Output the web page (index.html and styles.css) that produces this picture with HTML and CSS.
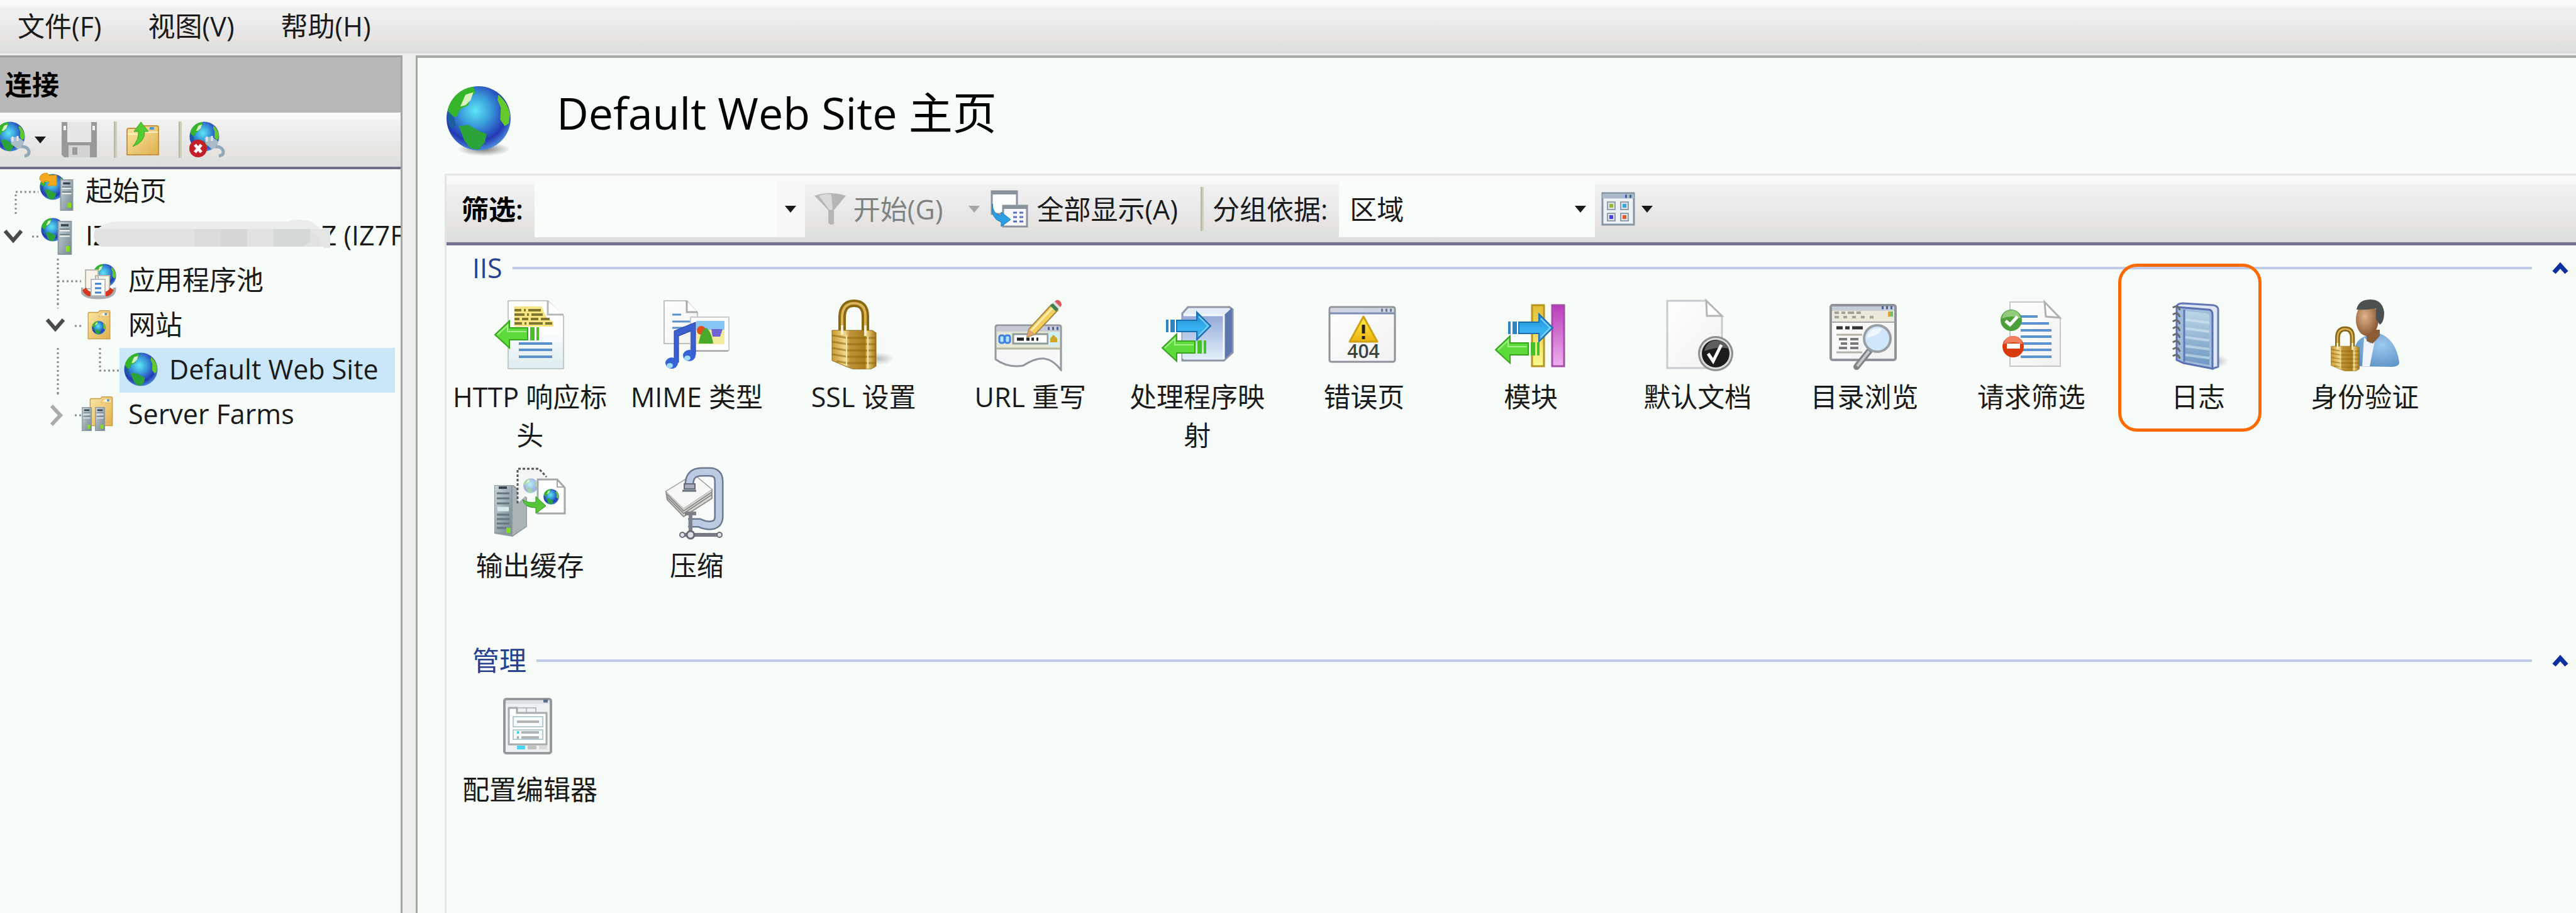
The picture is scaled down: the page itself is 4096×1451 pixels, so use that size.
FILE: index.html
```html
<!DOCTYPE html>
<html lang="zh-CN">
<head>
  <meta charset="utf-8">
  <title>Default Web Site 主页</title>
  <link rel="stylesheet" href="styles.css">
</head>
<body>
  <!-- shared gradients and symbols -->
  <svg class="defs" width="0" height="0" aria-hidden="true">
    <defs>
      <radialGradient id="gSea" cx="45%" cy="38%" r="65%">
        <stop offset="0" stop-color="#5fe6f5"/><stop offset=".35" stop-color="#3a9fdc"/>
        <stop offset=".75" stop-color="#2438b4"/><stop offset="1" stop-color="#4f9be0"/>
      </radialGradient>
      <linearGradient id="gGold" x1="0" x2="1" y1="0" y2="0">
        <stop offset="0" stop-color="#c79a33"/><stop offset=".3" stop-color="#f3d888"/>
        <stop offset=".4" stop-color="#c0943a"/><stop offset=".75" stop-color="#a97c1c"/>
        <stop offset=".8" stop-color="#ecd078"/><stop offset="1" stop-color="#a07416"/>
      </linearGradient>
      <linearGradient id="gPage" x1="0" x2="1" y1="0" y2="1">
        <stop offset="0" stop-color="#ffffff"/><stop offset="1" stop-color="#f1f1f1"/>
      </linearGradient>
      <linearGradient id="gPageBlue" x1="0" x2="0" y1="0" y2="1">
        <stop offset=".4" stop-color="#ffffff"/><stop offset="1" stop-color="#dcecef"/>
      </linearGradient>
      <linearGradient id="gFolder" x1="0" x2="1" y1="0" y2="1">
        <stop offset="0" stop-color="#fbe7a4"/><stop offset="1" stop-color="#dfb04f"/>
      </linearGradient>
      <linearGradient id="gServer" x1="0" x2="1" y1="0" y2="1">
        <stop offset="0" stop-color="#c9d4da"/><stop offset="1" stop-color="#74868f"/>
      </linearGradient>
      <linearGradient id="gBox" x1="0" x2="0" y1="0" y2="1">
        <stop offset="0" stop-color="#93a8d8"/><stop offset="1" stop-color="#e2effa"/>
      </linearGradient>
      <linearGradient id="gBlue" x1="0" x2="0" y1="0" y2="1">
        <stop offset="0" stop-color="#1d84c9"/><stop offset=".6" stop-color="#37b3f3"/><stop offset="1" stop-color="#4f9bd6"/>
      </linearGradient>
      <linearGradient id="gPurple" x1="0" x2="0" y1="0" y2="1">
        <stop offset="0" stop-color="#b93cbb"/><stop offset="1" stop-color="#eeb0ee"/>
      </linearGradient>
      <linearGradient id="gYellow" x1="0" x2="0" y1="0" y2="1">
        <stop offset="0" stop-color="#e3bf35"/><stop offset="1" stop-color="#fcf98f"/>
      </linearGradient>
      <linearGradient id="gBook" x1="0" x2="0" y1="0" y2="1">
        <stop offset="0" stop-color="#bcd6e6"/><stop offset="1" stop-color="#6f98c4"/>
      </linearGradient>
      <radialGradient id="gFace" cx="40%" cy="40%" r="60%">
        <stop offset="0" stop-color="#e0b58c"/><stop offset="1" stop-color="#8b5a34"/>
      </radialGradient>
      <radialGradient id="gShirt" cx="60%" cy="35%" r="70%">
        <stop offset="0" stop-color="#9dcaf0"/><stop offset="1" stop-color="#5d93c6"/>
      </radialGradient>
      <linearGradient id="gWarn" x1="0" x2="0" y1="0" y2="1">
        <stop offset="0" stop-color="#fdf04a"/><stop offset="1" stop-color="#edb30f"/>
      </linearGradient>
      <radialGradient id="gShadow">
        <stop offset="0" stop-color="#000" stop-opacity=".5"/><stop offset="1" stop-color="#000" stop-opacity="0"/>
      </radialGradient>
    </defs>

    <symbol id="globe" viewBox="0 0 100 100">
      <circle cx="50" cy="50" r="49" fill="url(#gSea)"/>
      <path d="M3 38C6 20 22 4 42 2l3 8-8 10-3 10-12 6-6 12-10-2z" fill="#35b52a"/>
      <path d="M30 14l12-4-4 12-8 8-8 2z" fill="#d9f3c0"/>
      <path d="M20 62l14-2 14 8 14 6-2 12-10 12-12-2-10-12z" fill="#2ba338"/>
      <path d="M80 14c10 8 16 18 18 30l-2 14-6 4-7-10 1-18-5-12z" fill="#63c92c"/>
      <path d="M4 40l8 8 4 14-8 4C3 58 2 48 4 40z" fill="#1c5d9c"/>
    </symbol>

    <symbol id="tower" viewBox="0 0 26 62">
      <rect x="1" y="1" width="24" height="60" fill="url(#gServer)" stroke="#8a979e" stroke-width="2"/>
      <path d="M6 8h14" stroke="#33424c" stroke-width="4"/>
      <path d="M4 18h18M4 28h18" stroke="#fff" stroke-width="2"/>
      <path d="M4 15h18M4 25h18" stroke="#6c7c86" stroke-width="2"/>
      <rect x="15" y="46" width="7" height="10" fill="#84e016"/>
    </symbol>

    <symbol id="plugglobe" viewBox="0 0 58 58">
      <use href="#globe" x="0" y="0" width="48" height="48"/>
      <path d="M24 26l12-2 10 8-2 10-8 2-10-8z" fill="#a9bcc8"/>
      <path d="M28 24v8M36 23v8" stroke="#dfe8ee" stroke-width="3"/>
      <path d="M42 40q10 0 12 7 1 7-7 8" fill="none" stroke="#8fa9b8" stroke-width="5"/>
    </symbol>

    <symbol id="folder" viewBox="0 0 52 68">
      <path d="M1 8q0-3 3-3h20l4-4h20q3 0 3 3v62H1z" fill="url(#gFolder)" stroke="#c99c48" stroke-width="2"/>
      <path d="M25 14l5-8h19v9z" fill="#f7dfa0" stroke="#d3a957"/>
      <path d="M34 9h5" stroke="#fff" stroke-width="5"/><path d="M39 9h5" stroke="#4a97d8" stroke-width="5"/>
    </symbol>

    <symbol id="padlock" viewBox="0 0 72 112">
      <path d="M17 56V28Q18 7 36 7t18 21v29" fill="none" stroke="#8b6712" stroke-width="12"/>
      <path d="M17 56V28Q18 7 36 7t18 21v29" fill="none" stroke="#d8b558" stroke-width="4"/>
      <path d="M1 50h64l6 4v53l-9 5H36l-14-5-21-9z" fill="url(#gGold)" stroke="#8f6c1b"/>
      <path d="M1 58l24 4h46M1 68l24 4h46M1 78l24 4h46M1 88l24 4h46M8 99l17 3h46" fill="none" stroke="#8d6411" stroke-opacity=".55" stroke-width="3"/>
      <path d="M24 58v48M58 60v50" stroke="#f6e5ad" stroke-width="2"/>
      <path d="M17 42v15M54 42v17" stroke="#f8efcf" stroke-width="4"/>
    </symbol>

    <symbol id="arrowleft" viewBox="0 0 74 48">
      <path d="M2 24L25 2v11h29v19H25v13z" fill="#5cdb3a" stroke="#37a51e" stroke-width="2"/>
      <path d="M6 24L22 9v10h30" fill="none" stroke="#a5f08c" stroke-width="2"/>
      <path d="M58 12h7v21h-7zM68 12h4v21h-4z" fill="#46bf2a"/>
    </symbol>

    <symbol id="arrowright" viewBox="0 0 74 48">
      <path d="M72 24L50 2v13H18v18h32v13z" fill="url(#gBlue)" stroke="#1a6fb0" stroke-width="2"/>
      <path d="M53 9l15 15-15 15" fill="none" stroke="#7fd0fa" stroke-width="2"/>
      <path d="M8 14h7v20H8zM1 14h4v20H1z" fill="#2a86c8"/>
    </symbol>

    <symbol id="caret" viewBox="0 0 18 11">
      <path d="M0 0h18L9 11z" fill="currentColor"/>
    </symbol>
  </svg>

  <nav class="menubar">
    <button>文件(F)</button>
    <button>视图(V)</button>
    <button>帮助(H)</button>
  </nav>

  <div class="window">
    <aside class="connections">
      <h2 class="pane-title">连接</h2>
      <div class="pane-toolbar bar">
        <button class="connect" aria-label="连接">
          <svg width="50" height="58" viewBox="8 0 50 58"><use href="#plugglobe" width="58" height="58"/></svg>
          <svg class="caret" width="18" height="11"><use href="#caret"/></svg>
        </button>
        <button aria-label="保存">
          <svg width="58" height="58" viewBox="0 0 58 58">
            <path d="M1 1h56v56H5l-4-4z" fill="#989a9a"/>
            <path d="M10 1h38v32H10z" fill="#e6e7e7"/>
            <path d="M12 38h34v19H12z" fill="#d2d4d3"/>
            <path d="M18 41h8v12h-8z" fill="#9a9c9b"/>
            <path d="M4 7h4v7H4zM50 7h4v7h-4z" fill="#f4f4f4"/>
          </svg>
        </button>
        <span class="sep"></span>
        <button aria-label="向上">
          <svg width="58" height="58" viewBox="0 0 58 58">
            <path d="M4 14q0-3 3-3h16l4-4h24q3 0 3 3v43H4z" fill="url(#gFolder)" stroke="#c79540" stroke-width="2"/>
            <path d="M5 20h24l4-3h20" fill="none" stroke="#fff3c8" stroke-width="2"/>
            <path d="M40 11h7" stroke="#4a97d8" stroke-width="4"/>
            <path d="M26 1l12 15h-6q1 16-19 24 10-11 9-24h-7z" fill="#53cc33" stroke="#3ba51f"/>
          </svg>
        </button>
        <span class="sep"></span>
        <button aria-label="断开连接">
          <svg width="58" height="58" viewBox="0 0 58 58">
            <use href="#plugglobe" width="58" height="58"/>
            <circle cx="14" cy="43" r="14" fill="#c4202a"/>
            <path d="M9 37l10 12M19 37L9 49" stroke="#fff" stroke-width="5"/>
          </svg>
        </button>
      </div>

      <ul class="tree">
        <li class="node">
          <svg class="guide" width="61" height="71"><path d="M25 71V36h36"/></svg>
          <svg class="node-icon" width="58" height="64" viewBox="0 0 58 64">
            <use href="#globe" x="2" y="3" width="42" height="46"/>
            <path d="M2 14Q2 4 14 4l3 4 12-1v17H14l4-5q-8-6-10 2z" fill="#f3a81e" stroke="#d98a0c"/>
            <use href="#tower" x="32" y="14" width="26" height="50" preserveAspectRatio="none"/>
          </svg>
          <a href="#">起始页</a>
        </li>
        <li class="node">
          <svg class="guide" width="61" height="71"><path d="M51 36h10"/><path class="open" d="M8 27l13 15 13-15"/></svg>
          <svg class="node-icon" width="58" height="64" viewBox="0 0 58 64">
            <use href="#globe" x="4" y="3" width="38" height="40"/>
            <use href="#tower" x="29" y="9" width="26" height="54" preserveAspectRatio="none"/>
          </svg>
          <a href="#" class="masked"><span>IZ</span><svg class="mask" width="386" height="50" viewBox="0 0 386 50">
              <path d="M40 4h270q14-6 38 0l14 10v26H10Q-4 26 10 14q14-10 30-10z" fill="#eaedea"/>
              <path d="M5 16h373v28H14Q-4 32 5 16z" fill="#e0e2e0"/>
              <path d="M162 16h42v28h-42z" fill="#dadcda"/><path d="M204 16h42v28h-42z" fill="#d4d7d4"/>
              <path d="M288 16h58v20l-12 8h-46z" fill="#d5d9d6"/><path d="M346 16h32v30h-10l-8-12z" fill="#e3e6e3"/>
            </svg><span>Z (IZ7F</span></a>
        </li>
        <li class="node">
          <svg class="guide" width="129" height="71"><path d="M92 0v71M92 36h37"/></svg>
          <svg class="node-icon" width="58" height="64" viewBox="0 0 58 64">
            <use href="#globe" x="18" y="4" width="38" height="42"/>
            <path d="M7 16h20v30H7zM23 25h22v30H23z" fill="#f6f3e8" stroke="#b9b7ac" stroke-width="2"/>
            <path d="M1 44q-2 16 26 16t26-16" fill="none" stroke="#a9aeb2" stroke-width="5"/>
            <path d="M2 48q4 10 14 10l2-7q-8-1-10-7zM52 48q-4 10-14 10l-2-7q8-1 10-7z" fill="#d8361f"/>
            <path d="M16 31h22v26H16z" fill="#fff" stroke="#b5bcc2" stroke-width="2"/>
            <path d="M22 38h10M22 45h10M22 52h10" stroke="#3d7fd0" stroke-width="3"/>
          </svg>
          <a href="#">应用程序池</a>
        </li>
        <li class="node">
          <svg class="guide" width="129" height="71"><path d="M92 0v8M119 36h10"/><path class="open" d="M75 26l13 15 13-15"/></svg>
          <svg class="node-icon" width="58" height="64" viewBox="0 0 58 64">
            <use href="#folder" x="3" y="9" width="51" height="47" preserveAspectRatio="none"/>
            <use href="#globe" x="17" y="26" width="22" height="22"/>
          </svg>
          <a href="#">网站</a>
        </li>
        <li class="node">
          <svg class="guide" width="190" height="71"><path d="M92 0v71M159 0v36h31"/></svg>
          <div class="selected">
            <svg class="node-icon" width="58" height="54" viewBox="0 0 58 54"><use href="#globe" x="3" y="0" width="54" height="54"/></svg>
            <a href="#">Default Web Site</a>
          </div>
        </li>
        <li class="node">
          <svg class="guide" width="129" height="71"><path d="M92 0v4M119 36h10"/><path class="closed" d="M82 21l14 15-14 15"/></svg>
          <svg class="node-icon" width="58" height="64" viewBox="0 0 58 64">
            <use href="#folder" x="7" y="4" width="50" height="48" preserveAspectRatio="none"/>
            <use href="#tower" x="0" y="21" width="18" height="38" preserveAspectRatio="none"/>
            <use href="#tower" x="21" y="21" width="18" height="38" preserveAspectRatio="none"/>
          </svg>
          <a href="#">Server Farms</a>
        </li>
      </ul>
    </aside>

    <main class="home">
      <header class="home-head">
        <svg width="106" height="112" viewBox="0 0 106 112">
          <ellipse cx="60" cy="101" rx="42" ry="11" fill="url(#gShadow)"/>
          <use href="#globe" width="104" height="104"/>
        </svg>
        <h1>Default Web Site 主页</h1>
      </header>

      <div class="features">
        <div class="filter bar">
          <label class="strong" for="filter">筛选:</label>
          <div class="combo">
            <input type="text" id="filter">
            <button aria-label="展开"><svg width="18" height="11"><use href="#caret"/></svg></button>
          </div>
          <button class="go" disabled>
            <svg width="52" height="52" viewBox="0 0 52 52">
              <path d="M1 5q24-8 50 0L32 28v22q-6 3-9-2V28z" fill="#b4b7b4"/>
              <path d="M8 5q10-4 20-2l2 24-5 1z" fill="#d8dad8"/>
            </svg>
            开始(G)
            <svg class="go-caret" width="18" height="11"><use href="#caret"/></svg>
          </button>
          <button class="show-all">
            <svg width="60" height="60" viewBox="0 0 60 60">
              <path d="M2 2h40v36H2z" fill="#fdfefe" stroke="#8a929e" stroke-width="3"/><path d="M1 4h42" stroke="#8a929e" stroke-width="6"/>
              <path d="M20 25h38v33H20z" fill="#f6f8fb" stroke="#8a929e" stroke-width="3"/><path d="M19 27h40" stroke="#8a929e" stroke-width="6"/>
              <path d="M36 36h6M46 36h6M36 43h6M46 43h6M36 50h6M46 50h6" stroke="#5b6fc0" stroke-width="3"/>
              <path d="M3 22q0 16 14 19v-6l15 12-15 11v-7Q0 46 3 22z" fill="#2ba0e0" stroke="#1b7fc0"/>
            </svg>
            全部显示(A)
          </button>
          <span class="sep"></span>
          <label for="group">分组依据:</label>
          <div class="combo group">
            <select id="group"><option>区域</option></select>
            <svg class="group-caret" width="18" height="11"><use href="#caret"/></svg>
          </div>
          <button class="view" aria-label="视图">
            <svg width="54" height="54" viewBox="0 0 54 54">
              <path d="M2 2h50v50H2z" fill="#eef2f5" stroke="#8595a3" stroke-width="3"/>
              <path d="M2 7h50" stroke="#aab9cc" stroke-width="7"/><path d="M38 7h3M45 7h3" stroke="#415f9c" stroke-width="5"/>
              <path d="M10 16h12v12H10zM31 16h12v12H31zM10 34h12v12H10zM31 34h12v12H31z" fill="#dce2e6" stroke="#93a0aa" stroke-width="2"/>
              <path d="M13 19h6v6h-6z" fill="#96b82c"/><path d="M34 19h6v6h-6z" fill="#36a5e0"/>
              <path d="M13 37h6v6h-6z" fill="#4a3fe0"/><path d="M34 37h6v6h-6z" fill="#e0582c"/>
            </svg>
            <svg width="18" height="11"><use href="#caret"/></svg>
          </button>
        </div>

        <section class="area">
          <h2 class="area-title"><span>IIS</span><i></i>
            <button aria-label="折叠"><svg width="26" height="20" viewBox="0 0 26 20"><path d="M3 17L13 6l10 11"/></svg></button></h2>
          <div class="grid">
            <a class="item" href="#">
              <svg viewBox="0 0 116 116">
                <path d="M23 4h63l25 24v84H23z" fill="url(#gPageBlue)" stroke="#c3cacb" stroke-width="2"/>
                <path d="M86 4v22h25" fill="#fff" stroke="#b5b8b8" stroke-width="3"/>
                <path d="M33 13h43l4 9 4 8 11 8v7H33z" fill="#f8e581"/>
                <path d="M33 19h11M48 19h3M55 19h20M33 26h16M53 26h3M60 26h18M33 33h8M45 33h10M59 33h12M75 33h14M33 40h12M49 40h3M56 40h22M82 40h11" stroke="#807634" stroke-width="4"/>
                <path d="M40 72h53M40 82h53M40 93h53" stroke="#5a90cc" stroke-width="4"/>
                <use href="#arrowleft" x="0" y="34" width="74" height="48"/>
              </svg>
              <span>HTTP 响应标头</span>
            </a>
            <a class="item" href="#">
              <svg viewBox="0 0 116 116">
                <path d="M6 4h36l17 19v49H6z" fill="url(#gPage)" stroke="#bfc2c4" stroke-width="2"/>
                <path d="M42 4v18h17" fill="#fff" stroke="#a9abac" stroke-width="3"/>
                <path d="M19 26h14M19 37h29M19 47h20" stroke="#5d90cd" stroke-width="3"/>
                <path d="M48 30h61v53H48z" fill="#fff" stroke="#c9cbcc" stroke-width="2"/><path d="M50 84h58" stroke="#a4a6a6" stroke-width="2"/>
                <path d="M57 36h45v20H57z" fill="#86c6f5"/><path d="M57 50h45v23H57z" fill="#f0ec9c"/>
                <path d="M81 49h18l-4 12H83z" fill="#6d62d6"/><circle cx="65" cy="51" r="7" fill="#e04e1e"/>
                <path d="M72 47q8 2 12 25H61q3-20 11-25z" fill="#4aa82a"/>
                <path d="M22 52L56 38v52h-7V52l-20 8v42h-7z" fill="#3a5fd0" stroke="#27409c"/>
                <ellipse cx="18" cy="103" rx="10" ry="9" fill="#3563d6"/><ellipse cx="46" cy="91" rx="10" ry="9" fill="#3563d6"/>
                <ellipse cx="15" cy="107" rx="5" ry="4" fill="#9fdcfa"/><ellipse cx="43" cy="95" rx="5" ry="4" fill="#9fdcfa"/>
              </svg>
              <span>MIME 类型</span>
            </a>
            <a class="item" href="#">
              <svg viewBox="0 0 116 116">
                <ellipse cx="82" cy="96" rx="24" ry="10" fill="url(#gShadow)" opacity=".5"/>
                <use href="#padlock" x="7" y="1" width="72" height="112"/>
              </svg>
              <span>SSL 设置</span>
            </a>
            <a class="item" href="#">
              <svg viewBox="0 0 116 116">
                <path d="M3 97V46q0-3 3-3h98q3 0 3 3v68q-12-16-26-18t-34 11Q22 111 3 97z" fill="#f7f7f8" stroke="#9297a0" stroke-width="3"/>
                <path d="M5 45h100v8H5z" fill="#c5cad6"/><path d="M5 53h100v26H5z" fill="#e7e7d5"/><path d="M4 80h102" stroke="#bab9a2" stroke-width="3"/>
                <path d="M86 48h3M93 48h3M100 48h3" stroke="#4b6295" stroke-width="5"/>
                <path d="M31 57h55v15H31z" fill="#fff" stroke="#8e9b98" stroke-width="3"/>
                <path d="M37 65h11M52 65h5M60 65h4M68 65h3" stroke="#222" stroke-width="5"/>
                <rect x="9" y="59" width="8" height="12" rx="3" fill="#b8e0fa" stroke="#3d83dd" stroke-width="3"/>
                <rect x="18" y="59" width="8" height="12" rx="3" fill="#b8e0fa" stroke="#3d83dd" stroke-width="3"/>
                <path d="M87 54h17v22H87z" fill="#cdeff5"/><path d="M90 70v-6l5-6 6 6v6z" fill="#d2a429"/>
                <path d="M53 62l3-13 36-39 10 9-36 38z" fill="#f3cf5c" stroke="#a8874a" stroke-width="2"/>
                <path d="M59 52l37-39" stroke="#fbeeae" stroke-width="3"/><path d="M53 62l3-13 10 8z" fill="#e0a26e"/>
                <path d="M90 12l5-5 9 9-5 5z" fill="#3c7e50"/><path d="M94 8l3-3 9 9-3 3z" fill="#ddd"/><path d="M97 5q5-5 9 0t0 9z" fill="#e0575e"/>
              </svg>
              <span>URL 重写</span>
            </a>
            <a class="item" href="#">
              <svg viewBox="0 0 116 116">
                <path d="M34 24l9-10h66l5 4v68l-14 13H34z" fill="#e4ecf8" stroke="#8d96a6" stroke-width="3"/>
                <path d="M34 27h66v69H34z" fill="url(#gBox)"/><path d="M100 27l13-12v70l-13 13z" fill="#5f77ac"/>
                <path d="M36 27h64v70" fill="none" stroke="#f4f8fd" stroke-width="3"/>
                <use href="#arrowright" x="7" y="20" width="74" height="48"/>
                <use href="#arrowleft" x="0" y="55" width="74" height="48"/>
              </svg>
              <span>处理程序映射</span>
            </a>
            <a class="item" href="#">
              <svg viewBox="0 0 116 116">
                <rect x="3" y="14" width="104" height="87" rx="3" fill="url(#gPage)" stroke="#8e9299" stroke-width="3"/>
                <path d="M5 16h100v8H5z" fill="#cdd4df"/><path d="M4 24h102" stroke="#7d90b4" stroke-width="3"/>
                <path d="M85 19h3M92 19h3M99 19h3" stroke="#6a7a9b" stroke-width="5"/>
                <path d="M57 29l22 40H35z" fill="url(#gWarn)" stroke="#cfa310" stroke-width="3" stroke-linejoin="round"/>
                <path d="M57 42v14M57 60v5" stroke="#222" stroke-width="5"/>
                <text x="57" y="95" class="code">404</text>
              </svg>
              <span>错误页</span>
            </a>
            <a class="item" href="#">
              <svg viewBox="0 0 116 116">
                <path d="M60 11h19v97H60z" fill="url(#gYellow)" stroke="#b8941f" stroke-width="3"/>
                <path d="M92 11h19v97H92z" fill="url(#gPurple)" stroke="#a54ba8" stroke-width="3"/>
                <use href="#arrowright" x="21" y="23" width="74" height="48"/>
                <use href="#arrowleft" x="0" y="58" width="74" height="48"/>
              </svg>
              <span>模块</span>
            </a>
            <a class="item" href="#">
              <svg viewBox="0 0 116 116">
                <path d="M10 4h62l25 25v82H10z" fill="url(#gPage)" stroke="#c8cbd0" stroke-width="3"/>
                <path d="M72 4l1 24h24z" fill="#fff" stroke="#b3b5b6" stroke-width="3"/>
                <circle cx="87" cy="88" r="28" fill="#8b8d8d"/><circle cx="87" cy="88" r="25" fill="#dcdddd"/>
                <circle cx="87" cy="88" r="22" fill="#1b1c1c"/><path d="M69 84q4-17 20-17 14 0 19 13-18-4-39 4z" fill="#5d5f5f"/>
                <path d="M75 88l8 12 13-26" fill="none" stroke="#fff" stroke-width="5"/>
              </svg>
              <span>默认文档</span>
            </a>
            <a class="item" href="#">
              <svg viewBox="0 0 116 116">
                <rect x="4" y="11" width="103" height="87" rx="3" fill="url(#gPage)" stroke="#8e9499" stroke-width="4"/>
                <path d="M6 13h99v7H6z" fill="#c6cdd6"/><path d="M6 20h99v18H6z" fill="#eae9dc"/><path d="M5 38h101" stroke="#a3a8ab" stroke-width="2"/>
                <path d="M85 15h3M92 15h3M99 15h3" stroke="#476296" stroke-width="5"/>
                <path d="M10 23h7M21 23h6M31 23h10M45 23h7M10 30h7M24 30h6M38 30h6M52 30h6M66 30h6" stroke="#a3a296" stroke-width="4"/>
                <path d="M95 21h4v8h-4z" fill="#e0a23a"/><path d="M99 21h4v8h-4z" fill="#6fc25c"/>
                <path d="M13 47h10M27 47h7M38 47h17" stroke="#333" stroke-width="5"/>
                <path d="M13 58h41M13 86h41" stroke="#b5b0a8" stroke-width="3"/>
                <path d="M17 65h13M35 65h13M20 72h10M35 72h13M17 79h13M35 79h13" stroke="#7a7a7a" stroke-width="4"/>
                <path d="M66 83l-21 26" stroke="#7f8284" stroke-width="10" stroke-linecap="round"/><path d="M65 84l-19 24" stroke="#c5c8ca" stroke-width="4"/>
                <circle cx="78" cy="64" r="21" fill="#cfe6fb" stroke="#9a9ea1" stroke-width="4"/><path d="M61 63q6-18 24-15-2 11-24 15z" fill="#eef7ff"/>
              </svg>
              <span>目录浏览</span>
            </a>
            <a class="item" href="#">
              <svg viewBox="0 0 116 116">
                <path d="M24 6h55l25 25v77H24z" fill="url(#gPage)" stroke="#c5c8c8" stroke-width="2"/>
                <path d="M79 6l2 23 22 2z" fill="#fff" stroke="#b0b2b2" stroke-width="3"/>
                <path d="M41 29h27M41 40h45M41 51h49M41 61h49M41 72h49M41 82h49M41 93h49" stroke="#5b93d2" stroke-width="4"/>
                <circle cx="26" cy="35" r="17" fill="#4ba03a"/><path d="M11 32q3-13 15-13t15 13q-14-6-30 0z" fill="#90cc7c"/>
                <path d="M17 36l7 6 12-13" fill="none" stroke="#fff" stroke-width="5"/>
                <circle cx="29" cy="77" r="17" fill="#d93a0c"/><path d="M14 73q3-13 15-13t15 13q-14-6-30 0z" fill="#f08060"/>
                <path d="M19 76h21" stroke="#fff" stroke-width="8"/>
              </svg>
              <span>请求筛选</span>
            </a>
            <a class="item marked" href="#">
              <svg viewBox="0 0 116 116">
                <ellipse cx="90" cy="100" rx="16" ry="10" fill="url(#gShadow)" opacity=".4"/>
                <path d="M24 14q0-6 10-6l48 3q7 1 8 6v92l-9 3z" fill="#dfe6f3" stroke="#6478b4" stroke-width="3"/>
                <path d="M24 14l50 4q7 0 7 8v86l-46-9-11-5z" fill="#9fbcdc" stroke="#5a70b0" stroke-width="3"/>
                <path d="M37 20l34 4q5 1 5 5v77l-39-7z" fill="url(#gBook)"/><path d="M36 18v83" stroke="#5c78b4" stroke-width="3"/>
                <path d="M38 34l38 5M38 48l38 5M38 62l38 5M38 76l38 5M38 90l38 5" stroke="#d3e6f0" stroke-opacity=".6" stroke-width="4"/>
                <path d="M18 15q8-6 11 4M18 26q8-6 11 4M18 37q8-6 11 4M18 48q8-6 11 4M18 59q8-6 11 4M18 70q8-6 11 4M18 81q8-6 11 4M18 92q8-6 11 4" fill="none" stroke="#666a6c" stroke-width="3"/>
              </svg>
              <span>日志</span>
            </a>
            <a class="item" href="#">
              <svg viewBox="0 0 116 116">
                <path d="M43 108V78q2-14 22-20l17-2q26 10 31 46 0 7-14 7z" fill="url(#gShirt)"/>
                <path d="M57 62l10 10 8-9-9 45H54z" fill="#f0f4fa"/><path d="M61 50h21v10l-11 12-10-4z" fill="#8c5c36"/>
                <ellipse cx="62" cy="34" rx="18" ry="26" fill="url(#gFace)"/>
                <path d="M45 18Q48 2 67 2t22 20q0 16-7 20l-6-9V16q-16 3-31 2z" fill="#4d5050"/>
                <use href="#padlock" x="4" y="44" width="46" height="72"/>
              </svg>
              <span>身份验证</span>
            </a>
            <a class="item" href="#">
              <svg viewBox="0 0 116 116">
                <path d="M1 29h31l21 20v46l-23 16-29-5z" fill="#8d999e"/>
                <path d="M2 30h26v76L2 104z" fill="url(#gServer)"/><path d="M30 30l22 20v44l-22 15z" fill="#a9b2b5"/>
                <path d="M8 33h13" stroke="#39464e" stroke-width="4"/><path d="M5 42h20M5 50h20M5 58h20M5 76h20M5 83h20M5 90h20M5 97h15" stroke="#66757e" stroke-width="3"/>
                <path d="M6 67h18" stroke="#d8ebe8" stroke-width="7"/><path d="M20 97h7v8h-7z" fill="#7ee018"/>
                <path d="M38 58V3h34l12 13" fill="#f4f6f5" stroke="#555" stroke-width="3" stroke-dasharray="4 3"/>
                <use href="#globe" x="47" y="18" width="24" height="24" opacity=".4"/>
                <path d="M70 20h31l12 13v41H70z" fill="#fff" stroke="#a5a8a8" stroke-width="3"/><path d="M101 20v12h12" fill="none" stroke="#a5a8a8" stroke-width="2"/>
                <use href="#globe" x="79" y="35" width="25" height="25"/>
                <path d="M46 52q8 6 21 4v-9l16 15-16 12v-9q-18 0-21-13z" fill="#54c637" stroke="#35962a"/>
              </svg>
              <span>输出缓存</span>
            </a>
            <a class="item" href="#">
              <svg viewBox="0 0 116 116">
                <path d="M9 39l44-27 29 24v14L37 79 11 52z" fill="#d9d9d6" stroke="#8f908e" stroke-width="2"/>
                <path d="M9 39l44-27 29 24-45 30z" fill="#f7f7f5" stroke="#a8a9a7"/><path d="M10 43l27 27 45-30M10 47l27 27 45-30" fill="none" stroke="#8c8d8b" stroke-width="2"/>
                <path d="M46 28q0-20 20-20h12q15 0 15 15v56q0 14-15 14-8 0-16-4H44" fill="none" stroke="#6a7890" stroke-width="15"/>
                <path d="M46 28q0-20 20-20h12q15 0 15 15v56q0 14-15 14-8 0-16-4H44" fill="none" stroke="#bccbe2" stroke-width="10"/>
                <path d="M38 27h17v8H38z" fill="#a7aebb" stroke="#626b7a" stroke-width="2"/><path d="M35 38h22" stroke="#626b7a" stroke-width="3"/>
                <path d="M48 72v32M39 74h18" stroke="#7c818c" stroke-width="6"/>
                <path d="M36 108h58" stroke="#767b88" stroke-width="6"/>
                <circle cx="48" cy="108" r="6" fill="#dde0e6" stroke="#666c78" stroke-width="3"/><circle cx="35" cy="108" r="4" fill="#dde0e6" stroke="#666c78" stroke-width="2"/><circle cx="94" cy="108" r="4" fill="#dde0e6" stroke="#666c78" stroke-width="2"/>
              </svg>
              <span>压缩</span>
            </a>
          </div>
        </section>

        <section class="area">
          <h2 class="area-title"><span>管理</span><i></i>
            <button aria-label="折叠"><svg width="26" height="20" viewBox="0 0 26 20"><path d="M3 17L13 6l10 11"/></svg></button></h2>
          <div class="grid">
            <a class="item" href="#">
              <svg viewBox="0 0 116 116">
                <rect x="17" y="13" width="74" height="86" rx="3" fill="#eef0f1" stroke="#95999b" stroke-width="4"/>
                <path d="M19 18h70" stroke="#dbe3e8" stroke-width="5"/><path d="M79 16h7" stroke="#5a6c8a" stroke-width="5"/>
                <path d="M24 27h13v8h47v50H24z" fill="#fdfefe" stroke="#a7abad" stroke-width="3"/>
                <path d="M38 27h29v7M52 27v7" fill="none" stroke="#b5bfc7" stroke-width="2"/>
                <path d="M31 41h47v16H31zM31 62h47v15H31z" fill="#f8fbfb" stroke="#b9cbd2" stroke-width="2"/>
                <path d="M37 49h35M44 66h28M44 74h28" stroke="#b0b5b3" stroke-width="4"/><path d="M37 66h3" stroke="#3ccdf5" stroke-width="4"/><path d="M37 74h3" stroke="#a5a9a8" stroke-width="4"/>
                <path d="M37 90h13" stroke="#4fd4fa" stroke-width="6"/><path d="M54 90h14" stroke="#bec3c0" stroke-width="6"/><path d="M72 90h13" stroke="#dcd9da" stroke-width="6"/>
              </svg>
              <span>配置编辑器</span>
            </a>
          </div>
        </section>
      </div>
    </main>
  </div>
</body>
</html>
```
FILE: styles.css
```css
*, *::after { box-sizing: border-box; }
body {
  margin: 0;
  min-height: 100vh;
  display: flex;
  flex-direction: column;
  background: #ecefec;
  color: #1a1a1a;
  font-family: "Open Sans", "Noto Sans CJK SC", sans-serif;
  font-size: 43px;
  line-height: 61px;
  overflow: hidden;
}
h1, h2, ul { margin: 0; padding: 0; font-weight: normal; }
h2 { font-size: 43px; }
a { color: inherit; text-decoration: none; }
svg { display: block; flex: none; }
button, input, select {
  margin: 0;
  padding: 0;
  border: 0;
  background: none;
  color: inherit;
  font: inherit;
}
.defs { position: absolute; }

.bar, .menubar {
  background: linear-gradient(#f9f9f9 0, #f7f7f7 13%, #f0f2f0 14%, #ececec 40%, #e6e6e6 62%, #e7e2dd 76%, #dfe3df 82%, #dddddd 100%);
}
.menubar {
  height: 85px;
  display: flex;
  align-items: center;
  gap: 74px;
  padding: 0 28px 2px;
}

.window {
  flex: 1;
  display: flex;
  gap: 21px;
  padding-top: 3px;
}

/* left pane */
.connections {
  width: 640px;
  flex: none;
  border-top: 3px solid #9a9d9a;
  border-right: 3px solid #a3a6a3;
  background: #f7fcf8;
  overflow: hidden;
}
.pane-title {
  height: 88px;
  padding: 13px 8px;
  background: #b8b8b8;
  color: #000;
  font-weight: 600;
}
.pane-toolbar {
  height: 90px;
  display: flex;
  align-items: center;
  border-bottom: 4px solid #6f6f8c;
}
.connect {
  display: flex;
  align-items: center;
  gap: 5px;
  margin-right: 24px;
}
.sep {
  width: 5px;
  height: 58px;
  background: #cfcfb4;
  border-left: 2px solid #b4b5ae;
}
.pane-toolbar .sep { margin: 0 12px 0 26px; }
.pane-toolbar .sep + button { margin-right: 2px; }

.tree { list-style: none; }
.node {
  height: 71px;
  display: flex;
  align-items: center;
  white-space: nowrap;
}
.node a { margin-bottom: 5px; }
.guide path {
  fill: none;
  stroke: #8a8d8a;
  stroke-width: 3;
  stroke-dasharray: 3 4;
}
.guide .open, .guide .closed { stroke: #4a4a4a; stroke-width: 6; stroke-dasharray: none; }
.guide .closed { stroke: #ababab; }
.node-icon { margin: 0 17px 3px 0; }
.selected {
  width: 438px;
  height: 71px;
  display: flex;
  align-items: center;
  padding-left: 4px;
  background: #c9e7f8;
}
.masked { display: flex; align-items: center; }
.mask { position: relative; margin: 0 -22px 0 -26px; }

/* right pane */
.home {
  flex: 1;
  min-width: 0;
  display: flex;
  flex-direction: column;
  border-top: 4px solid #a3a8a3;
  border-left: 3px solid #a3a8a3;
  background: #f7fcf8;
  padding-left: 43px;
}
.home-head {
  height: 184px;
  display: flex;
  align-items: center;
  gap: 70px;
  padding: 15px 2px 0;
}
.home-head h1 {
  color: #000;
  font-size: 70px;
  line-height: 100px;
  padding-bottom: 26px;
}
.features { flex: 1; border-left: 3px solid #e4e4e6; }
.filter {
  height: 114px;
  display: flex;
  align-items: center;
  padding-left: 24px;
  border-top: 3px solid #e5e5e5;
  border-bottom: 5px solid #73738f;
  white-space: nowrap;
}
.filter .strong { font-weight: 600; margin-right: 18px; color: #000; }
.combo {
  display: flex;
  width: 430px;
  height: 89px;
  background: #f9fdfa;
}
.combo input { flex: 1; min-width: 0; }
.combo button {
  width: 46px;
  display: flex;
  align-items: center;
  justify-content: center;
  background: #f8f8f8;
}
.filter > button { display: flex; align-items: center; }
.go { color: #808280; gap: 11px; margin: 0 17px 0 14px; }
.go-caret { margin-left: 30px; color: #a5a7a5; }
.show-all { gap: 13px; }
.filter .sep { height: 70px; margin: 0 14px 0 36px; }
.group { width: 407px; margin-left: 18px; position: relative; }
.group select {
  flex: 1;
  appearance: none;
  padding-left: 17px;
}
.group-caret { position: absolute; right: 14px; top: 39px; pointer-events: none; }
.view { gap: 10px; margin-left: 10px; }

.area { padding-top: 5px; }
.area + .area { padding-top: 90px; }
.area-title {
  display: flex;
  align-items: center;
  padding: 0 12px 0 41px;
  color: #27408f;
}
.area-title i {
  flex: 1;
  height: 4px;
  margin: 0 32px 0 16px;
  background: #c0cbea;
}
.area-title path { fill: none; stroke: #0b2f9c; stroke-width: 7; }

.grid {
  display: grid;
  grid-template-columns: repeat(12, 1fr);
  row-gap: 20px;
  padding: 18px 203px 0 0;
}
.item {
  position: relative;
  display: flex;
  flex-direction: column;
  align-items: center;
  gap: 10px;
  padding: 0 8px;
  text-align: center;
}
.item svg { width: 116px; height: 116px; }
.code {
  font-size: 30px;
  font-weight: 600;
  text-anchor: middle;
  fill: #3c4440;
}
/* highlight frame around the log feature */
.marked::after {
  content: "";
  position: absolute;
  left: 5px;
  top: -55px;
  width: 228px;
  height: 267px;
  border: 5px solid #ff6a00;
  border-radius: 30px;
}
```
